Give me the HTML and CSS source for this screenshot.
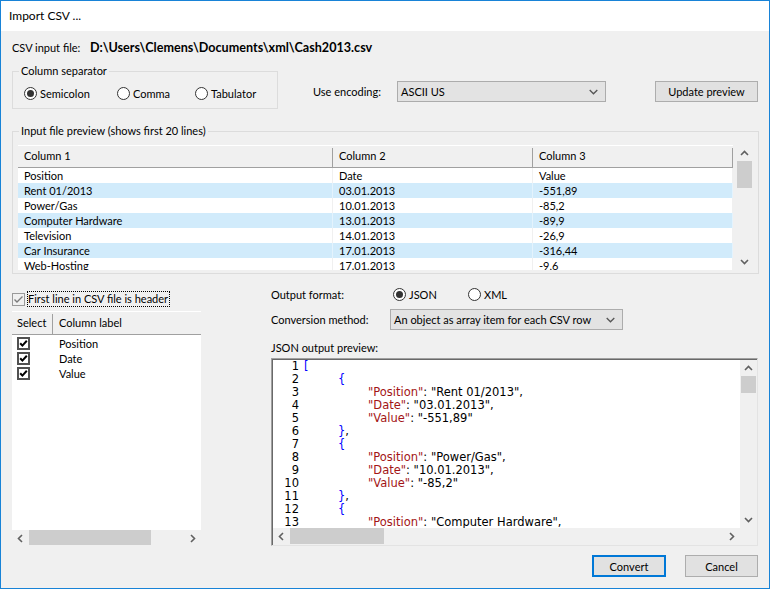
FILE: index.html
```html
<!DOCTYPE html>
<html>
<head>
<meta charset="utf-8">
<title>Import CSV</title>
<link rel="stylesheet" href="styles.css">
</head>
<body>
<div class="window">
  <div class="titlebar">Import CSV ...</div>
  <div class="content">
    <div class="file-row"><span class="file-label">CSV input file:</span><span class="file-path">D:\Users\Clemens\Documents\xml\Cash2013.csv</span></div>

    <div class="sep-row">
      <fieldset class="group sep-group">
        <legend>Column separator</legend>
        <div class="sep-inner">
          <div class="radio w93"><span class="rb checked"></span>Semicolon</div>
          <div class="radio w78"><span class="rb"></span>Comma</div>
          <div class="radio"><span class="rb"></span>Tabulator</div>
        </div>
      </fieldset>
      <div class="encoding">
        <span class="enc-label">Use encoding:</span>
        <div class="select enc-select"><span>ASCII US</span><svg class="dd" width="9" height="6" viewBox="0 0 9 6"><path d="M0.7 1 L4.5 4.8 L8.3 1" fill="none" stroke="#555" stroke-width="1.3"/></svg></div>
      </div>
      <div class="button update-btn">Update preview</div>
    </div>

    <fieldset class="group preview-group">
      <legend>Input file preview (shows first 20 lines)</legend>
      <div class="preview-inner">
        <div class="grid">
          <div class="grow head"><div class="c c1">Column 1</div><div class="c c2">Column 2</div><div class="c c3">Column 3</div></div>
          <div class="grow"><div class="c c1">Position</div><div class="c c2">Date</div><div class="c c3">Value</div></div>
          <div class="grow alt"><div class="c c1">Rent 01/2013</div><div class="c c2">03.01.2013</div><div class="c c3">-551,89</div></div>
          <div class="grow"><div class="c c1">Power/Gas</div><div class="c c2">10.01.2013</div><div class="c c3">-85,2</div></div>
          <div class="grow alt"><div class="c c1">Computer Hardware</div><div class="c c2">13.01.2013</div><div class="c c3">-89,9</div></div>
          <div class="grow"><div class="c c1">Television</div><div class="c c2">14.01.2013</div><div class="c c3">-26,9</div></div>
          <div class="grow alt"><div class="c c1">Car Insurance</div><div class="c c2">17.01.2013</div><div class="c c3">-316,44</div></div>
          <div class="grow"><div class="c c1">Web-Hosting</div><div class="c c2">17.01.2013</div><div class="c c3">-9,6</div></div>
        </div>
        <div class="vscroll grid-vs">
          <div class="sb-btn"><svg width="9" height="6" viewBox="0 0 9 6"><path d="M1 5 L4.5 1.5 L8 5" fill="none" stroke="#606060" stroke-width="1.6"/></svg></div>
          <div class="thumb-v t-grid"></div>
          <div class="sb-fill"></div>
          <div class="sb-btn"><svg width="9" height="6" viewBox="0 0 9 6"><path d="M1 1 L4.5 4.5 L8 1" fill="none" stroke="#606060" stroke-width="1.6"/></svg></div>
        </div>
      </div>
    </fieldset>

    <div class="bottom">
      <div class="left-col">
        <div class="hdr-check">
          <svg class="cb-light" width="13" height="13" viewBox="0 0 13 13"><rect x="0.5" y="0.5" width="12" height="12" fill="none" stroke="#9a9a9a"/><path d="M2.5 6.5 L5 9 L10.5 3.5" fill="none" stroke="#7a7a7a" stroke-width="1.4"/></svg>
          <span class="focus-label">First line in CSV file is header</span>
        </div>
        <div class="list">
          <div class="list-head"><div class="lh1">Select</div><div class="lh2">Column label</div></div>
          <div class="list-body">
            <div class="lrow"><span class="lcb"><svg width="13" height="13" viewBox="0 0 13 13"><rect x="1" y="1" width="11" height="11" fill="#fff" stroke="#505050" stroke-width="2"/><path d="M3.2 6.3 L5.4 8.6 L9.8 3.8" fill="none" stroke="#000" stroke-width="2"/></svg></span><span>Position</span></div>
            <div class="lrow"><span class="lcb"><svg width="13" height="13" viewBox="0 0 13 13"><rect x="1" y="1" width="11" height="11" fill="#fff" stroke="#505050" stroke-width="2"/><path d="M3.2 6.3 L5.4 8.6 L9.8 3.8" fill="none" stroke="#000" stroke-width="2"/></svg></span><span>Date</span></div>
            <div class="lrow"><span class="lcb"><svg width="13" height="13" viewBox="0 0 13 13"><rect x="1" y="1" width="11" height="11" fill="#fff" stroke="#505050" stroke-width="2"/><path d="M3.2 6.3 L5.4 8.6 L9.8 3.8" fill="none" stroke="#000" stroke-width="2"/></svg></span><span>Value</span></div>
          </div>
          <div class="hscroll list-hs">
            <div class="sb-hbtn"><svg width="6" height="9" viewBox="0 0 6 9"><path d="M5 1 L1.5 4.5 L5 8" fill="none" stroke="#606060" stroke-width="1.6"/></svg></div>
            <div class="thumb-h t-list"></div>
            <div class="sb-fill"></div>
            <div class="sb-hbtn"><svg width="6" height="9" viewBox="0 0 6 9"><path d="M1 1 L4.5 4.5 L1 8" fill="none" stroke="#606060" stroke-width="1.6"/></svg></div>
          </div>
        </div>
      </div>

      <div class="right-col">
        <div class="fmt-row">
          <span class="fmt-label">Output format:</span>
          <div class="radio w75"><span class="rb checked"></span>JSON</div>
          <div class="radio"><span class="rb"></span>XML</div>
        </div>
        <div class="conv-row">
          <span class="conv-label">Conversion method:</span>
          <div class="select conv-select"><span>An object as array item for each CSV row</span><svg class="dd" width="9" height="6" viewBox="0 0 9 6"><path d="M0.7 1 L4.5 4.8 L8.3 1" fill="none" stroke="#555" stroke-width="1.3"/></svg></div>
        </div>
        <div class="json-label">JSON output preview:</div>
        <div class="editor">
          <div class="code-area">
            <div class="gutter">
              <div>1</div><div>2</div><div>3</div><div>4</div><div>5</div><div>6</div><div>7</div><div>8</div><div>9</div><div>10</div><div>11</div><div>12</div><div>13</div>
            </div>
            <div class="code">
              <div class="ln"><span class="br">[</span></div>
              <div class="ln i1"><span class="br">{</span></div>
              <div class="ln i2"><span class="key">"Position"</span>: "Rent 01/2013",</div>
              <div class="ln i2"><span class="key">"Date"</span>: "03.01.2013",</div>
              <div class="ln i2"><span class="key">"Value"</span>: "-551,89"</div>
              <div class="ln i1"><span class="br">}</span>,</div>
              <div class="ln i1"><span class="br">{</span></div>
              <div class="ln i2"><span class="key">"Position"</span>: "Power/Gas",</div>
              <div class="ln i2"><span class="key">"Date"</span>: "10.01.2013",</div>
              <div class="ln i2"><span class="key">"Value"</span>: "-85,2"</div>
              <div class="ln i1"><span class="br">}</span>,</div>
              <div class="ln i1"><span class="br">{</span></div>
              <div class="ln i2"><span class="key">"Position"</span>: "Computer Hardware",</div>
            </div>
          </div>
          <div class="vscroll ed-vs">
            <div class="sb-btn"><svg width="9" height="6" viewBox="0 0 9 6"><path d="M1 5 L4.5 1.5 L8 5" fill="none" stroke="#606060" stroke-width="1.6"/></svg></div>
            <div class="thumb-v t-ed"></div>
            <div class="sb-fill"></div>
            <div class="sb-btn"><svg width="9" height="6" viewBox="0 0 9 6"><path d="M1 1 L4.5 4.5 L8 1" fill="none" stroke="#606060" stroke-width="1.6"/></svg></div>
          </div>
          <div class="hscroll ed-hs">
            <div class="sb-hbtn"><svg width="6" height="9" viewBox="0 0 6 9"><path d="M5 1 L1.5 4.5 L5 8" fill="none" stroke="#606060" stroke-width="1.6"/></svg></div>
            <div class="thumb-h t-ed-h"></div>
            <div class="sb-fill"></div>
            <div class="sb-hbtn"><svg width="6" height="9" viewBox="0 0 6 9"><path d="M1 1 L4.5 4.5 L1 8" fill="none" stroke="#606060" stroke-width="1.6"/></svg></div>
          </div>
          <div class="corner"></div>
        </div>
      </div>
    </div>

    <div class="actions">
      <div class="button btn-convert">Convert</div>
      <div class="button btn-cancel">Cancel</div>
    </div>
  </div>
</div>
</body>
</html>
```

FILE: styles.css
```css
* { box-sizing: border-box; }
html, body { margin: 0; padding: 0; }
body {
  width: 770px;
  height: 589px;
  overflow: hidden;
  background: #f0f0f0;
  font-family: Lato, "Liberation Sans", sans-serif;
  font-size: 11px;
  color: #000;
}
.window {
  width: 770px;
  height: 589px;
  border: 1px solid #1883d7;
  background: #f0f0f0;
  display: flex;
  flex-direction: column;
}
.titlebar {
  flex: none;
  height: 30px;
  line-height: 30px;
  background: #fff;
  padding-left: 8px;
  font-size: 12px;
}
.content {
  flex: 1;
  display: flex;
  flex-direction: column;
  padding: 9px 10px 0 11px;
}
.file-row {
  display: flex;
  height: 16px;
  line-height: 16px;
}
.file-label { width: 78px; }
.file-path { font-weight: 700; font-size: 12.6px; }

/* group boxes */
.group {
  margin: 0;
  padding: 0;
  border: 1px solid #dcdcdc;
  min-width: 0;
}
.group legend {
  margin-left: 6px;
  padding: 0 2px;
  height: 16px;
  line-height: 16px;
}
.sep-row {
  display: flex;
  align-items: flex-start;
  margin-top: 7px;
}
.sep-group { width: 266px; flex: none; }
.sep-inner {
  display: flex;
  align-items: center;
  height: 29px;
  padding: 6px 0 7px 11px;
}
.radio {
  display: flex;
  align-items: center;
  height: 16px;
}
.w93 { width: 93px; }
.w78 { width: 78px; }
.w75 { width: 75px; }
.rb {
  width: 13px;
  height: 13px;
  border: 1px solid #333;
  border-radius: 50%;
  background: #fff;
  margin-right: 3px;
  display: flex;
  align-items: center;
  justify-content: center;
  flex: none;
}
.rb.checked::after {
  content: "";
  width: 7px;
  height: 7px;
  border-radius: 50%;
  background: #333;
}
.encoding {
  display: flex;
  align-items: center;
  height: 21px;
  margin-top: 18px;
  margin-left: 35px;
}
.enc-label { width: 84px; }
.select {
  display: flex;
  align-items: center;
  justify-content: space-between;
  height: 21px;
  background: #e3e3e3;
  border: 1px solid #acacac;
  padding: 0 7px 0 3px;
  white-space: nowrap;
}
.enc-select { width: 209px; }
.dd { flex: none; }
.button {
  display: flex;
  align-items: center;
  justify-content: center;
  background: #e1e1e1;
  border: 1px solid #adadad;
}
.update-btn {
  width: 103px;
  height: 21px;
  margin-top: 18px;
  margin-left: auto;
  margin-right: 1px;
}

/* preview group */
.preview-group { margin-top: 14px; }
.preview-inner {
  display: flex;
  gap: 3px;
  padding: 6px 5px 3px 5px;
}
.grid {
  width: 715px;
  height: 125px;
  overflow: hidden;
  background: #fff;
}
.grow {
  display: flex;
  height: 15px;
  line-height: 15px;
}
.grow.alt { background: #d1ebfb; }
.c {
  padding-left: 6px;
  border-right: 1px solid #f0f0f0;
  white-space: nowrap;
  overflow: hidden;
}
.grow.alt .c { border-right-color: #e4f3fd; }
.c1 { width: 315px; }
.c2 { width: 200px; }
.c3 { width: 200px; }
.grow.head {
  height: 23px;
  line-height: 21px;
  background: #f0f0f0;
  border-top: 1px solid #fff;
  border-bottom: 1px solid #a0a0a0;
}
.grow.head .c { border-right: 1px solid #a0a0a0; margin-top: 2px; line-height: 16px; }

/* scrollbars */
.vscroll {
  display: flex;
  flex-direction: column;
  width: 17px;
  background: #f0f0f0;
}
.grid-vs { height: 125px; }
.sb-btn {
  height: 16px;
  display: flex;
  align-items: center;
  justify-content: center;
  flex: none;
}
.sb-fill { flex: 1; }
.thumb-v {
  margin: 0 1px;
  background: #cdcdcd;
  flex: none;
}
.t-grid { height: 27px; }
.t-ed { height: 17px; }
.hscroll {
  display: flex;
  height: 17px;
  background: #f0f0f0;
}
.sb-hbtn {
  width: 16px;
  display: flex;
  align-items: center;
  justify-content: center;
  flex: none;
}
.thumb-h {
  margin: 0 0 2px 0;
  background: #cdcdcd;
  flex: none;
}

/* bottom */
.bottom {
  display: flex;
  margin-top: 12px;
}
.left-col {
  width: 189px;
  flex: none;
  padding-top: 5px;
}
.hdr-check {
  display: flex;
  align-items: center;
  height: 16px;
}
.cb-light { flex: none; }
.focus-label {
  margin-left: 2px;
  border: 1px dotted #000;
  padding: 0 1px 0 0;
  line-height: 14px;
  white-space: nowrap;
}
.list {
  margin-top: 4px;
  height: 235px;
  display: flex;
  flex-direction: column;
}
.list-head {
  display: flex;
  height: 24px;
  background: #f0f0f0;
  border-top: 1px solid #fff;
  border-bottom: 1px solid #a0a0a0;
  flex: none;
}
.lh1 {
  width: 41px;
  padding-left: 5px;
  border-right: 1px solid #a0a0a0;
  margin-top: 2px;
  line-height: 18px;
}
.lh2 {
  padding-left: 6px;
  line-height: 22px;
}
.list-body {
  flex: 1;
  background: #fff;
  padding-top: 1px;
}
.lrow {
  display: flex;
  align-items: center;
  height: 15px;
}
.lcb {
  width: 41px;
  padding-left: 5px;
  display: flex;
  align-items: center;
}
.lrow > span:last-child { padding-left: 6px; }
.list-hs { height: 16px; flex: none; }
.list-hs .thumb-h { margin: 0; height: 15px; }
.t-list { width: 122px; margin-left: 1px !important; }

.right-col {
  width: 487px;
  margin-left: 70px;
  flex: none;
}
.fmt-row {
  display: flex;
  align-items: center;
  height: 16px;
}
.fmt-label { width: 122px; }
.conv-row {
  display: flex;
  align-items: center;
  height: 21px;
  margin-top: 7px;
}
.conv-label { width: 119px; }
.conv-select { width: 233px; }
.json-label {
  margin-top: 10px;
  height: 16px;
  line-height: 16px;
}
.editor {
  margin-top: 2px;
  width: 487px;
  height: 188px;
  border-top: 1px solid #a0a0a0;
  border-left: 1px solid #a0a0a0;
  border-right: 1px solid #e3e3e3;
  border-bottom: 1px solid #e3e3e3;
  box-shadow: inset 1px 1px 0 #696969;
  padding: 1px 0 0 1px;
  display: grid;
  grid-template-columns: 1fr 17px;
  grid-template-rows: 1fr 17px;
  background: #fff;
}
.code-area {
  display: flex;
  overflow: hidden;
  font-family: "DejaVu Sans", Verdana, sans-serif;
  font-size: 11.5px;
  line-height: 13px;
  white-space: nowrap;
}
.gutter {
  width: 30px;
  flex: none;
  text-align: right;
  padding-right: 4px;
}
.code { padding-left: 1px; }
.ln.i1 { padding-left: 34px; }
.ln.i2 { padding-left: 64px; }
.br { color: #0000ff; }
.key { color: #a31515; }
.ed-hs .thumb-h { height: 16px; margin: 0; }
.t-ed-h { width: 94px; margin-left: 1px !important; }
.corner { background: #f0f0f0; }

/* actions */
.actions {
  display: flex;
  justify-content: flex-end;
  gap: 19px;
  margin-top: 9px;
  padding-right: 1px;
}
.btn-convert {
  width: 74px;
  height: 22px;
  border: 2px solid #0078d7;
}
.btn-cancel {
  width: 73px;
  height: 22px;
}
```
